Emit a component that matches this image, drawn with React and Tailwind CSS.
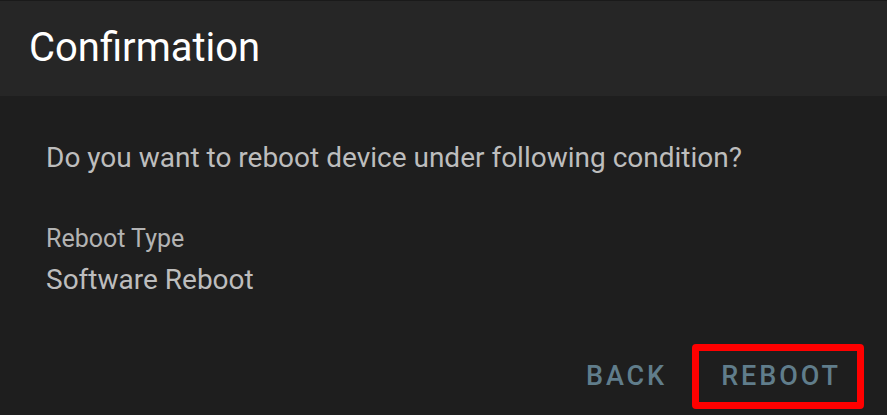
export default function App() {
  return (
    <div className="w-[887px] h-[415px] bg-[#1e1e1e] flex flex-col overflow-hidden" style={{ fontFamily: "Roboto, 'Noto Sans', sans-serif" }}>
      <div className="h-[96px] shrink-0 bg-[#262626] border-t border-[#1a1a1a] flex items-center pl-[29px]">
        <h1 className="text-[40px] leading-none text-white font-normal -mt-[1px]">Confirmation</h1>
      </div>
      <div className="flex-1 flex flex-col pl-[46px] pt-[46px]">
        <p className="text-[28px] leading-[32px] text-[#bdbdbd]">Do you want to reboot device under following condition?</p>
        <p className="mt-[51px] text-[25px] leading-[28px] text-[#b3b3b3]">Reboot Type</p>
        <p className="mt-[11px] text-[28px] leading-[32px] text-[#bdbdbd]">Software Reboot</p>
        <div className="mt-auto flex justify-end items-center gap-[17px] pr-[23px] pb-[6px]">
          <button className="h-[65px] px-[8px] text-[27px] font-medium tracking-[2.9px] text-[#607d8b] uppercase">Back</button>
          <button className="h-[65px] w-[172px] pl-[6px] border-[7px] border-[#ff0000] rounded-[4px] text-[27px] font-medium tracking-[2.9px] text-[#607d8b] uppercase">Reboot</button>
        </div>
      </div>
    </div>
  );
}
